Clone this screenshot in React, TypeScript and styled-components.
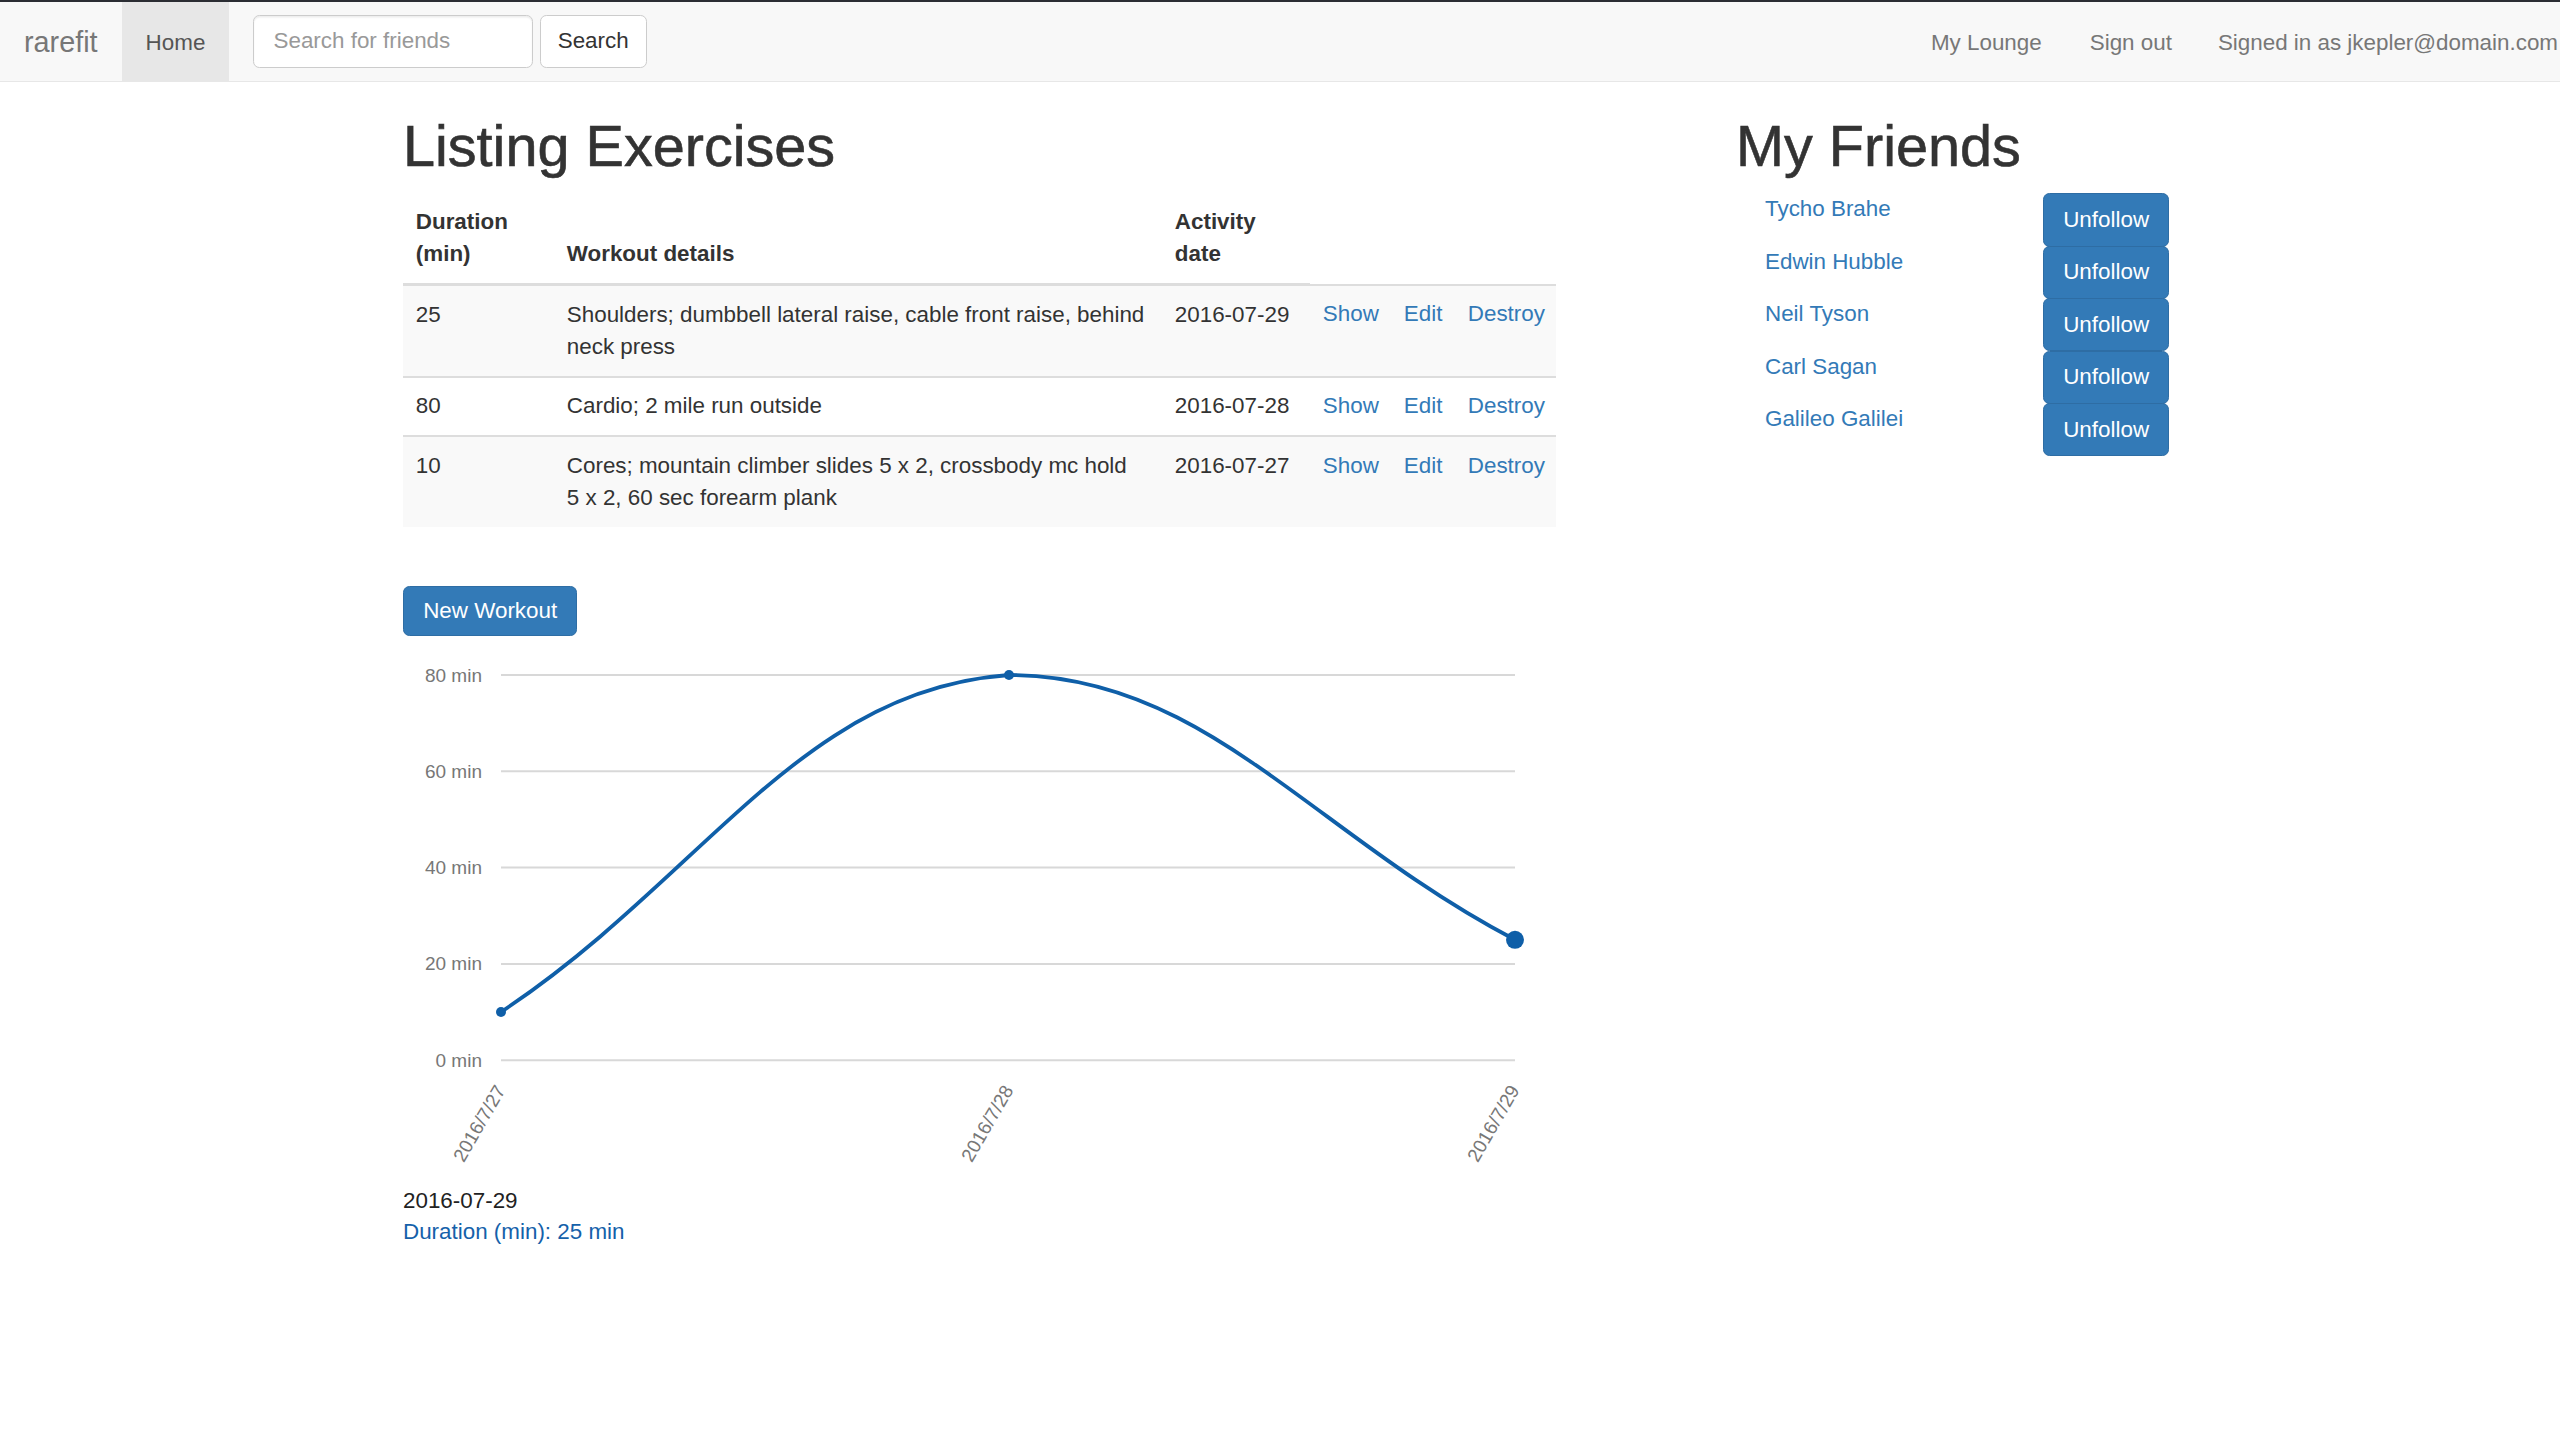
import React from "react";
import styled, { createGlobalStyle } from "styled-components";

const GlobalStyle = createGlobalStyle`
  html, body { margin: 0; padding: 0; background: #fff; }
  body {
    font-family: "Liberation Sans", Arial, Helvetica, sans-serif;
    font-size: 22.4px;
    line-height: 32px;
    color: #333;
    overflow-x: hidden;
  }
  * { box-sizing: border-box; }
`;

const TopEdge = styled.div`
  height: 2px;
  background: #2b2d33;
`;

const Navbar = styled.nav`
  display: flex;
  justify-content: space-between;
  align-items: stretch;
  height: 80px;
  background: #f8f8f8;
  border-bottom: 1.6px solid #e7e7e7;
`;

const NavGroup = styled.div<{ $right?: boolean }>`
  display: flex;
  align-items: stretch;
  white-space: nowrap;
  margin-right: ${(p) => (p.$right ? "2px" : "0")};
`;

const Brand = styled.a`
  padding: 24px 24px 0;
  font-size: 28.8px;
  line-height: 32px;
  color: #777;
  text-decoration: none;
`;

const NavLink = styled.a<{ $active?: boolean }>`
  padding: 25px 24px 0;
  line-height: 32px;
  color: ${(p) => (p.$active ? "#555" : "#777")};
  background: ${(p) => (p.$active ? "#e7e7e7" : "transparent")};
  text-decoration: none;
`;

const NavText = styled.span`
  padding-top: 25px;
  margin-left: 22px;
  line-height: 32px;
  color: #777;
`;

const SearchForm = styled.form`
  display: flex;
  align-items: flex-start;
  gap: 6.4px;
  padding: 12.8px 24px 0;
  margin: 0;
`;

const SearchInput = styled.input`
  width: 280px;
  height: 53px;
  padding: 0 19.2px;
  font-family: inherit;
  font-size: 22.4px;
  color: #555;
  background: #fff;
  border: 1.6px solid #ccc;
  border-radius: 6.4px;
  box-shadow: inset 0 1.6px 1.6px rgba(0, 0, 0, 0.075);
  outline: none;
  &::placeholder { color: #999; }
`;

const DefaultButton = styled.button`
  height: 53px;
  padding: 0 17px;
  font-family: inherit;
  font-size: 22.4px;
  color: #333;
  background: #fff;
  border: 1.6px solid #ccc;
  border-radius: 6.4px;
`;

const Main = styled.main`
  display: grid;
  grid-template-columns: 1153px 1fr;
  column-gap: 180px;
  padding-left: 403px;
`;

const Column = styled.section`
  display: flex;
  flex-direction: column;
  align-items: flex-start;
`;

const Title = styled.h1`
  margin: 33px 0 15px;
  font-size: 57.6px;
  line-height: 63.4px;
  font-weight: 400;
  color: #333;
  -webkit-text-stroke: 0.6px #333;
`;

const Table = styled.table`
  width: 1153px;
  border-collapse: collapse;
  table-layout: fixed;
  margin-bottom: 32px;
`;

const Th = styled.th`
  text-align: left;
  vertical-align: bottom;
  padding: 12.8px;
  line-height: 32px;
  font-weight: 700;
  border-bottom: 3px solid #ddd;
`;

const Row = styled.tr`
  &:nth-child(odd) td { background: #f9f9f9; }
`;

const Td = styled.td`
  padding: 12.8px;
  line-height: 32px;
  vertical-align: top;
  border-top: 2px solid #ddd;
`;

const Link = styled.a`
  color: #337ab7;
  text-decoration: none;
`;

const PrimaryButton = styled.a<{ $tall?: boolean }>`
  display: inline-block;
  padding: ${(p) => (p.$tall ? "9.6px" : "8px")} 19.2px;
  line-height: 32px;
  color: #fff;
  background: #337ab7;
  border: 1.6px solid #2e6da4;
  border-radius: 6.4px;
  text-decoration: none;
  white-space: nowrap;
`;

const ButtonRow = styled.div`
  margin-top: 27px;
`;

const ChartBox = styled.div`
  margin-top: 12.8px;
  width: 1153px;
  height: 536px;
`;

const TipDate = styled.div`
  line-height: 31px;
  color: #222;
`;

const TipValue = styled.div`
  line-height: 31px;
  color: #1561aa;
`;

const FriendList = styled.div`
  display: flex;
  flex-direction: column;
  padding-left: 29px;
`;

const FriendRow = styled.div`
  display: flex;
  align-items: flex-start;
  height: 52.4px;
`;

const FriendName = styled(Link)`
  flex: 0 0 278px;
  line-height: 32px;
`;

const NB = "\u00a0";

const exercises = [
  { dur: 25, details: "Shoulders; dumbbell lateral raise, cable front raise, behind neck press", date: "2016-07-29" },
  { dur: 80, details: "Cardio; 2 mile run outside", date: "2016-07-28" },
  {
    dur: 10,
    details: `Cores; mountain climber slides 5${NB}x${NB}2, crossbody mc hold 5${NB}x${NB}2, 60 sec forearm plank`,
    date: "2016-07-27",
  },
];

const friends = ["Tycho Brahe", "Edwin Hubble", "Neil Tyson", "Carl Sagan", "Galileo Galilei"];

const LINE = "#0f5fa8";
const grid = [80, 60, 40, 20, 0];
const yOf = (v: number) => 411.2 - v * 4.815;
const points = [
  { x: 98, v: 10, label: "2016/7/27", r: 5 },
  { x: 606, v: 80, label: "2016/7/28", r: 5 },
  { x: 1112, v: 25, label: "2016/7/29", r: 9 },
];

function Chart() {
  return (
    <svg width="1153" height="536" viewBox="0 0 1153 536">
      {grid.map((g) => (
        <g key={g}>
          <line x1={98} x2={1112} y1={yOf(g)} y2={yOf(g)} stroke="#d8d8d8" strokeWidth={2} />
          <text
            x={79}
            y={yOf(g) + 6.5}
            textAnchor="end"
            fontSize={19}
            fill="#777"
            fontFamily='"Liberation Sans", Arial, sans-serif'
          >
            {g} min
          </text>
        </g>
      ))}
      <path
        d="M98,363 C301.2,228.2 396.6,40.9 606,26 C802.2,26 909.6,185 1112,290.8"
        fill="none"
        stroke={LINE}
        strokeWidth={3.8}
      />
      {points.map((p) => (
        <circle key={p.label} cx={p.x} cy={yOf(p.v)} r={p.r} fill={LINE} />
      ))}
      {points.map((p) => (
        <text
          key={"l" + p.label}
          x={p.x + 5}
          y={441}
          textAnchor="end"
          fontSize={19}
          fill="#777"
          fontFamily='"Liberation Sans", Arial, sans-serif'
          transform={`rotate(-60 ${p.x + 5} 441)`}
        >
          {p.label}
        </text>
      ))}
    </svg>
  );
}

export default function App() {
  return (
    <>
      <GlobalStyle />
      <TopEdge />
      <Navbar>
        <NavGroup>
          <Brand href="#">rarefit</Brand>
          <NavLink href="#" $active>
            Home
          </NavLink>
          <SearchForm onSubmit={(e) => e.preventDefault()}>
            <SearchInput placeholder="Search for friends" />
            <DefaultButton type="submit">Search</DefaultButton>
          </SearchForm>
        </NavGroup>
        <NavGroup $right>
          <NavLink href="#">My Lounge</NavLink>
          <NavLink href="#">Sign out</NavLink>
          <NavText>Signed in as jkepler@domain.com</NavText>
        </NavGroup>
      </Navbar>
      <Main>
        <Column>
          <Title>Listing Exercises</Title>
          <Table>
            <colgroup>
              <col style={{ width: 151 }} />
              <col style={{ width: 608 }} />
              <col style={{ width: 148 }} />
              <col style={{ width: 81 }} />
              <col style={{ width: 64 }} />
              <col style={{ width: 101 }} />
            </colgroup>
            <thead>
              <tr>
                <Th>Duration (min)</Th>
                <Th>Workout details</Th>
                <Th>Activity date</Th>
              </tr>
            </thead>
            <tbody>
              {exercises.map((e) => (
                <Row key={e.date}>
                  <Td>{e.dur}</Td>
                  <Td>{e.details}</Td>
                  <Td>{e.date}</Td>
                  <Td>
                    <Link href="#">Show</Link>
                  </Td>
                  <Td>
                    <Link href="#">Edit</Link>
                  </Td>
                  <Td>
                    <Link href="#">Destroy</Link>
                  </Td>
                </Row>
              ))}
            </tbody>
          </Table>
          <ButtonRow>
            <PrimaryButton href="#">New Workout</PrimaryButton>
          </ButtonRow>
          <ChartBox>
            <Chart />
          </ChartBox>
          <TipDate>2016-07-29</TipDate>
          <TipValue>Duration (min): 25 min</TipValue>
        </Column>
        <Column>
          <Title>My Friends</Title>
          <FriendList>
            {friends.map((f) => (
              <FriendRow key={f}>
                <FriendName href="#">{f}</FriendName>
                <PrimaryButton href="#" $tall>
                  Unfollow
                </PrimaryButton>
              </FriendRow>
            ))}
          </FriendList>
        </Column>
      </Main>
    </>
  );
}
